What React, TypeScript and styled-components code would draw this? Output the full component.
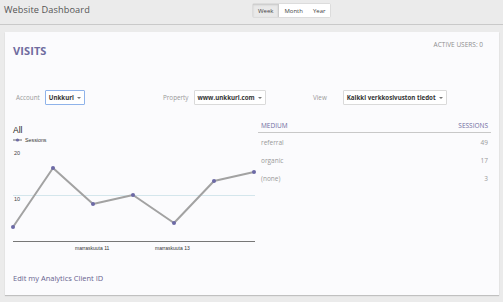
import React from "react";
import styled, { createGlobalStyle, css } from "styled-components";

const GlobalStyle = createGlobalStyle`
  html, body {
    margin: 0;
    padding: 0;
    background: #ebebeb;
  }
  body {
    font-family: "Open Sans", "Liberation Sans", sans-serif;
  }
`;

const Page = styled.div`
  width: 503px;
  height: 302px;
  overflow: hidden;
`;

const Header = styled.header`
  height: 25px;
  display: flex;
  align-items: flex-start;
  border-bottom: 1px solid #c9c9c9;
  box-sizing: border-box;
  padding-left: 4px;
`;

const Title = styled.h1`
  width: 248px;
  margin: 3px 0 0;
  font-size: 9.2px;
  font-weight: 400;
  color: #555;
  letter-spacing: 0.1px;
`;

const Segmented = styled.div`
  display: flex;
  margin-top: 3px;
  border: 1px solid #dcdcdc;
  border-radius: 2px;
  background: #fff;
  height: 15px;
  box-sizing: border-box;
`;

const SegButton = styled.button<{ active?: boolean }>`
  border: 0;
  padding: 0 5px;
  font-family: inherit;
  font-size: 6px;
  color: #444;
  background: #fff;
  ${({ active }) =>
    active &&
    css`
      background: #e9e9e9;
      box-shadow: inset 0 1px 2px rgba(0, 0, 0, 0.15);
      border-right: 1px solid #ccc;
    `}
`;

const Card = styled.section`
  margin: 7px 4px 0 5px;
  background: #fbfbfd;
  box-shadow: 0 1px 1px rgba(0, 0, 0, 0.18);
  height: 263px;
  box-sizing: border-box;
  padding: 8px 0 0;
`;

const CardTop = styled.div`
  display: flex;
  justify-content: space-between;
  align-items: flex-start;
  padding: 0 16px 0 8px;
`;

const CardTitle = styled.h2`
  margin: 3px 0 0;
  font-size: 11px;
  font-weight: 700;
  color: #6f6c9f;
  letter-spacing: 0.1px;
`;

const ActiveUsers = styled.div`
  font-size: 6.5px;
  color: #8e8e8e;
`;

const Filters = styled.div`
  display: grid;
  grid-template-columns: 147px 150px 1fr;
  margin-top: 32px;
  padding-left: 11px;
`;

const Filter = styled.div<{ gap: number }>`
  display: flex;
  align-items: center;
  gap: ${({ gap }) => gap}px;
`;

const FilterLabel = styled.span`
  font-size: 6.3px;
  color: #999;
`;

const Select = styled.div<{ focused?: boolean }>`
  display: flex;
  align-items: center;
  height: 15px;
  box-sizing: border-box;
  padding: 0 3px 0 3px;
  background: #fff;
  border: 1px solid ${({ focused }) => (focused ? "#8fb3ea" : "#dadada")};
  border-radius: 1px;
  font-size: 6.2px;
  font-weight: 700;
  color: #333;
  white-space: nowrap;
`;

const Caret = styled.span`
  width: 0;
  height: 0;
  margin-left: 3px;
  border-left: 2px solid transparent;
  border-right: 2px solid transparent;
  border-top: 2px solid #777;
`;

const Content = styled.div`
  display: grid;
  grid-template-columns: 253px 233px;
  margin-top: 16px;
`;

const Chart = styled.svg`
  display: block;
`;

const Table = styled.table`
  width: 233px;
  border-collapse: collapse;
  font-size: 6.5px;
`;

const Th = styled.th<{ right?: boolean }>`
  text-align: ${({ right }) => (right ? "right" : "left")};
  font-weight: 400;
  color: #6f6c9f;
  padding: 0 3px 2px;
  border-bottom: 1px solid #c8c8c8;
`;

const Td = styled.td<{ right?: boolean }>`
  text-align: ${({ right }) => (right ? "right" : "left")};
  color: #999;
  padding: 5px 3px 4px;
`;

const EditLink = styled.a`
  display: block;
  margin: 17px 0 0 8px;
  font-size: 7.5px;
  color: #67648f;
  text-decoration: none;
`;

const rows = [
  { medium: "referral", sessions: 49 },
  { medium: "organic", sessions: 17 },
  { medium: "(none)", sessions: 3 },
];

const points: [number, number][] = [
  [13, 226],
  [53, 167],
  [93, 203],
  [133, 194],
  [174, 222],
  [214, 180],
  [254, 171],
];

const axisFont = "Liberation Sans, Arial, sans-serif";

function SessionsChart() {
  return (
    <Chart width={253} height={135} viewBox="5 120 253 135">
      <text x={13} y={132} fontSize={8.5} fontFamily={axisFont} fill="#222">
        All
      </text>
      <line x1={13} y1={139} x2={22} y2={139} stroke="#9a9a9a" strokeWidth={1.5} />
      <circle cx={17.5} cy={139} r={1.6} fill="#6c69a6" />
      <text x={25} y={141} fontSize={5.3} fontFamily={axisFont} fill="#333">
        Sessions
      </text>
      <text x={14} y={154} fontSize={5.5} fontFamily={axisFont} fill="#444">
        20
      </text>
      <text x={14} y={200} fontSize={5.5} fontFamily={axisFont} fill="#444">
        10
      </text>
      <line x1={13} y1={194.5} x2={255} y2={194.5} stroke="#d4e6ec" strokeWidth={1} />
      <line x1={13} y1={240.5} x2={255} y2={240.5} stroke="#777" strokeWidth={1} />
      <polyline
        points={points.map((p) => p.join(",")).join(" ")}
        fill="none"
        stroke="#a2a2a2"
        strokeWidth={2}
        strokeLinejoin="round"
      />
      {points.map(([x, y]) => (
        <circle key={x} cx={x} cy={y} r={2} fill="#6c69a6" />
      ))}
      <text x={75} y={249} fontSize={5} fontFamily={axisFont} fill="#333">
        marraskuuta 11
      </text>
      <text x={155} y={249} fontSize={5} fontFamily={axisFont} fill="#333">
        marraskuuta 13
      </text>
    </Chart>
  );
}

export default function App() {
  return (
    <Page>
      <GlobalStyle />
      <Header>
        <Title>Website Dashboard</Title>
        <Segmented>
          <SegButton active>Week</SegButton>
          <SegButton>Month</SegButton>
          <SegButton>Year</SegButton>
        </Segmented>
      </Header>
      <Card>
        <CardTop>
          <CardTitle>VISITS</CardTitle>
          <ActiveUsers>ACTIVE USERS: 0</ActiveUsers>
        </CardTop>
        <Filters>
          <Filter gap={5}>
            <FilterLabel>Account</FilterLabel>
            <Select focused>
              Unkkuri <Caret />
            </Select>
          </Filter>
          <Filter gap={5}>
            <FilterLabel>Property</FilterLabel>
            <Select>
              www.unkkuri.com <Caret />
            </Select>
          </Filter>
          <Filter gap={16}>
            <FilterLabel>View</FilterLabel>
            <Select>
              Kaikki verkkosivuston tiedot <Caret />
            </Select>
          </Filter>
        </Filters>
        <Content>
          <SessionsChart />
          <div>
            <Table>
              <thead>
                <tr>
                  <Th>MEDIUM</Th>
                  <Th right>SESSIONS</Th>
                </tr>
              </thead>
              <tbody>
                {rows.map((r) => (
                  <tr key={r.medium}>
                    <Td>{r.medium}</Td>
                    <Td right>{r.sessions}</Td>
                  </tr>
                ))}
              </tbody>
            </Table>
          </div>
        </Content>
        <EditLink href="#">Edit my Analytics Client ID</EditLink>
      </Card>
    </Page>
  );
}
